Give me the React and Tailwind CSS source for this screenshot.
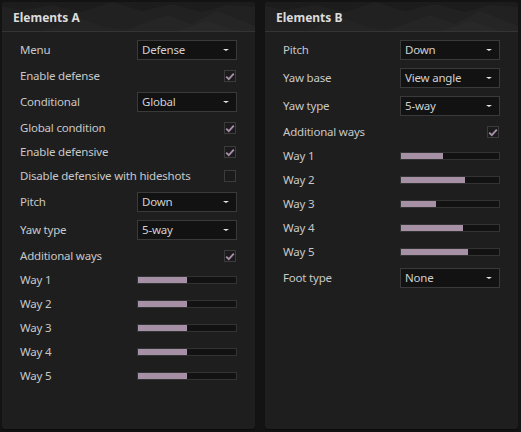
import React from 'react';

// Two-column settings menu: panels with a textured header, then rows of
// dropdowns, checkboxes and sliders.

const panelA = [
  { type: 'select', label: 'Menu', value: 'Defense' },
  { type: 'check', label: 'Enable defense', on: true },
  { type: 'select', label: 'Conditional', value: 'Global' },
  { type: 'check', label: 'Global condition', on: true },
  { type: 'check', label: 'Enable defensive', on: true },
  { type: 'check', label: 'Disable defensive with hideshots', on: false },
  { type: 'select', label: 'Pitch', value: 'Down' },
  { type: 'select', label: 'Yaw type', value: '5-way' },
  { type: 'check', label: 'Additional ways', on: true },
  { type: 'slider', label: 'Way 1', pct: 50 },
  { type: 'slider', label: 'Way 2', pct: 50 },
  { type: 'slider', label: 'Way 3', pct: 50 },
  { type: 'slider', label: 'Way 4', pct: 50 },
  { type: 'slider', label: 'Way 5', pct: 50 },
];

const panelB = [
  { type: 'select', label: 'Pitch', value: 'Down' },
  { type: 'select', label: 'Yaw base', value: 'View angle' },
  { type: 'select', label: 'Yaw type', value: '5-way' },
  { type: 'check', label: 'Additional ways', on: true },
  { type: 'slider', label: 'Way 1', pct: 43 },
  { type: 'slider', label: 'Way 2', pct: 65 },
  { type: 'slider', label: 'Way 3', pct: 36 },
  { type: 'slider', label: 'Way 4', pct: 63 },
  { type: 'slider', label: 'Way 5', pct: 68 },
  { type: 'select', label: 'Foot type', value: 'None' },
];

function HeaderPattern() {
  return (
    <svg className="absolute inset-0 h-full w-full" viewBox="0 0 253 29" preserveAspectRatio="none">
      <polygon points="0,0 253,0 253,5 225,3 200,10 170,2 140,9 110,0 80,10 50,3 20,8 0,4" fill="#1c1c1c" />
      <polygon points="120,29 165,13 190,22 215,9 253,24 253,29" fill="#252525" />
      <polygon points="40,29 75,15 100,24 125,29" fill="#242424" />
      <polygon points="175,29 205,19 235,29" fill="#282828" />
    </svg>
  );
}

function Select({ value }) {
  return (
    <div className="flex h-[20px] w-[100px] items-center justify-between border border-[#3a3a3a] bg-[#121212] pl-[4px] pr-[7px] text-[11.5px] tracking-[-0.2px] text-[#d0d0d0]">
      <span className="leading-none">{value}</span>
      <span className="h-0 w-0 border-x-[3px] border-t-[2px] border-x-transparent border-t-[#e6e6e6]" />
    </div>
  );
}

function Check({ on }) {
  return (
    <div className="mr-[1px] flex h-[12px] w-[12px] items-center justify-center border border-[#3b3b3b] bg-[#1b1b1b]">
      {on && (
        <svg width="10" height="9" viewBox="0 0 10 9">
          <path d="M1.2 4.6 L3.8 7.2 L8.8 1.6" fill="none" stroke="#a78fa8" strokeWidth="1.8" />
        </svg>
      )}
    </div>
  );
}

function Slider({ pct }) {
  return (
    <div className="h-[8px] w-[100px] border border-[#333] bg-[#121212]">
      <div className="h-full bg-[#a690a6]" style={{ width: `${pct}%` }} />
    </div>
  );
}

function Row({ item }) {
  const tall = item.type === 'select';
  return (
    <div className={`flex items-center justify-between ${tall ? 'h-[28px]' : 'h-[24px]'}`}>
      <span className="text-[11.5px] tracking-[-0.2px] text-[#c8c8c8]">{item.label}</span>
      {item.type === 'select' && <Select value={item.value} />}
      {item.type === 'check' && <Check on={item.on} />}
      {item.type === 'slider' && <Slider pct={item.pct} />}
    </div>
  );
}

function Panel({ title, rows }) {
  return (
    <div className="flex h-[427px] w-[253px] flex-col overflow-hidden rounded-[3px] bg-[#1e1e1e] shadow-[0_1px_0_#0b0b0b]">
      <div className="relative h-[29px] shrink-0 bg-[#212121]">
        <HeaderPattern />
        <div className="relative flex h-full items-center pl-[11px] pt-[2px] text-[12px] font-bold text-[#dcdcdc]">
          {title}
        </div>
      </div>
      <div className="h-px shrink-0 bg-[#343434]" />
      <div className="flex flex-col px-[18px] pt-[4px]">
        {rows.map((r, i) => (
          <Row key={i} item={r} />
        ))}
      </div>
    </div>
  );
}

export default function App() {
  return (
    <div
      className="flex h-[432px] w-[521px] gap-[10px] bg-[#131313] pl-[2px] pt-[2px]"
      style={{ fontFamily: '"Noto Sans", "Open Sans", sans-serif' }}
    >
      <Panel title="Elements A" rows={panelA} />
      <Panel title="Elements B" rows={panelB} />
    </div>
  );
}
